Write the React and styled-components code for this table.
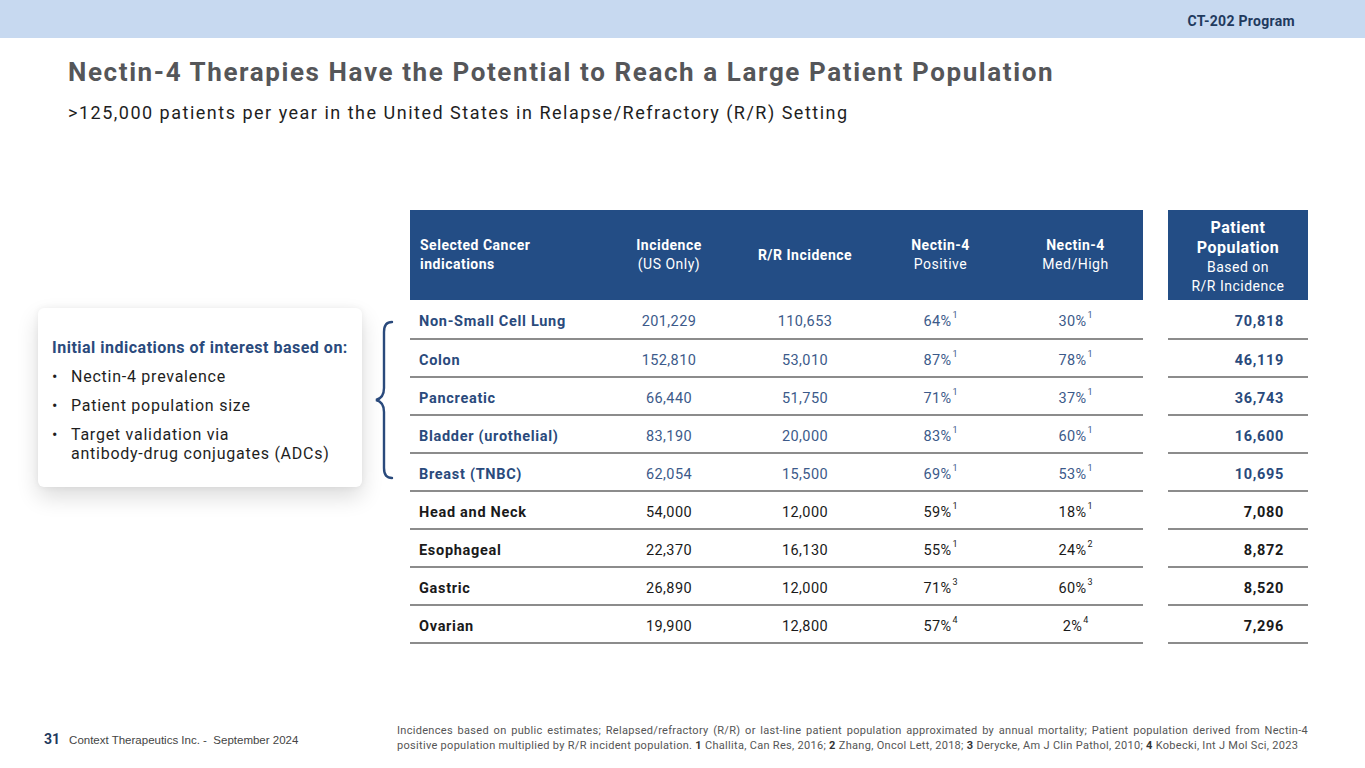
import styled, { createGlobalStyle } from 'styled-components'

const GlobalStyle = createGlobalStyle`
  html, body { margin: 0; padding: 0; background: #fff; }
  body { font-family: Roboto, "Noto Sans", sans-serif; }
  *, *::before, *::after { box-sizing: border-box; }
`

const NAVY = '#234d85'
const TEXT_NAVY = '#2a4a7c'

const rows = [
  { name: 'Non-Small Cell Lung', inc: '201,229', rr: '110,653', pos: '64%', posRef: 1, med: '30%', medRef: 1, pop: '70,818', hi: true },
  { name: 'Colon', inc: '152,810', rr: '53,010', pos: '87%', posRef: 1, med: '78%', medRef: 1, pop: '46,119', hi: true },
  { name: 'Pancreatic', inc: '66,440', rr: '51,750', pos: '71%', posRef: 1, med: '37%', medRef: 1, pop: '36,743', hi: true },
  { name: 'Bladder (urothelial)', inc: '83,190', rr: '20,000', pos: '83%', posRef: 1, med: '60%', medRef: 1, pop: '16,600', hi: true },
  { name: 'Breast (TNBC)', inc: '62,054', rr: '15,500', pos: '69%', posRef: 1, med: '53%', medRef: 1, pop: '10,695', hi: true },
  { name: 'Head and Neck', inc: '54,000', rr: '12,000', pos: '59%', posRef: 1, med: '18%', medRef: 1, pop: '7,080' },
  { name: 'Esophageal', inc: '22,370', rr: '16,130', pos: '55%', posRef: 1, med: '24%', medRef: 2, pop: '8,872' },
  { name: 'Gastric', inc: '26,890', rr: '12,000', pos: '71%', posRef: 3, med: '60%', medRef: 3, pop: '8,520' },
  { name: 'Ovarian', inc: '19,900', rr: '12,800', pos: '57%', posRef: 4, med: '2%', medRef: 4, pop: '7,296' },
]

const Slide = styled.div`
  width: 1365px;
  height: 768px;
  display: flex;
  flex-direction: column;
  overflow: hidden;
  position: relative;
`

const TopBar = styled.header`
  height: 38px;
  background: #c7d9f0;
  display: flex;
  align-items: center;
  justify-content: flex-end;
  padding-right: 70px;
  padding-top: 4px;
  font-size: 14px;
  font-weight: 700;
  color: #1f3a5e;
  letter-spacing: 0.3px;
`

const Heading = styled.div`
  padding-left: 68px;
  margin-top: 18px;
`

const Title = styled.h1`
  margin: 0;
  font-size: 26px;
  line-height: 32px;
  font-weight: 700;
  color: #555659;
  letter-spacing: 1.6px;
`

const Subtitle = styled.p`
  margin: 13px 0 0;
  font-size: 18px;
  line-height: 24px;
  color: #1e1e1e;
  letter-spacing: 1.5px;
`

const Main = styled.main`
  display: flex;
  align-items: flex-start;
  margin-top: 85px;
  padding-left: 38px;
`

const InfoCard = styled.div`
  width: 324px;
  height: 179px;
  margin-top: 98px;
  padding: 30px 0 0 14px;
  background: #fff;
  border-radius: 6px;
  box-shadow: 0 10px 22px rgba(0, 0, 0, 0.14), 0 0 6px rgba(0, 0, 0, 0.06);
`

const CardTitle = styled.div`
  font-size: 16px;
  font-weight: 700;
  color: ${TEXT_NAVY};
  letter-spacing: 0.5px;
  margin-bottom: 10px;
`

const Bullets = styled.ul`
  margin: 0;
  padding: 0;
  list-style: none;
`

const Bullet = styled.li`
  position: relative;
  padding-left: 19px;
  font-size: 16px;
  line-height: 19px;
  color: #1e1e1e;
  letter-spacing: 0.75px;
  margin-bottom: 10px;
  &::before {
    content: '•';
    position: absolute;
    left: 0;
    top: 0;
  }
`

const Brace = styled.svg`
  margin: 110px 16px 0 12px;
  flex-shrink: 0;
`

const Table = styled.div`
  display: grid;
  grid-template-columns: 191px 136px 136px 135px 135px 165px;
`

const HeadCell = styled.div`
  height: 90px;
  background: ${NAVY};
  color: #fff;
  display: flex;
  flex-direction: column;
  justify-content: center;
  align-items: ${(p) => (p.$left ? 'flex-start' : 'center')};
  text-align: ${(p) => (p.$left ? 'left' : 'center')};
  padding-left: ${(p) => (p.$left ? '10px' : '0')};
  padding-top: ${(p) => (p.$sep ? '4px' : '0')};
  margin-left: ${(p) => (p.$sep ? '25px' : '0')};
  font-size: 14px;
  line-height: 19px;
  letter-spacing: 0.5px;
`

const HeadBold = styled.span`
  font-weight: 700;
  font-size: ${(p) => (p.$big ? '16px' : '14px')};
  line-height: ${(p) => (p.$big ? '20px' : '19px')};
`

const Cell = styled.div`
  height: ${(p) => (p.$first ? '40px' : '38px')};
  border-bottom: 2px solid #8c8c8c;
  display: flex;
  align-items: center;
  justify-content: ${(p) => (p.$align === 'left' ? 'flex-start' : p.$align === 'right' ? 'flex-end' : 'center')};
  padding-left: ${(p) => (p.$align === 'left' ? '9px' : '0')};
  padding-right: ${(p) => (p.$align === 'right' ? '24px' : '0')};
  margin-left: ${(p) => (p.$sep ? '25px' : '0')};
  padding-top: 4px;
  font-size: 14.5px;
  font-weight: ${(p) => (p.$bold ? 700 : 400)};
  color: ${(p) => (p.$hi ? (p.$bold ? TEXT_NAVY : '#3c5a8a') : '#1a1a1a')};
  letter-spacing: ${(p) => (p.$bold ? '0.7px' : '0.4px')};
`

const Sup = styled.span`
  font-size: 9px;
  line-height: 1;
  position: relative;
  top: -6px;
  margin-left: 1px;
  letter-spacing: 0;
`

const Footer = styled.footer`
  margin-top: auto;
  height: 58px;
  display: flex;
  align-items: flex-start;
  padding: 13px 0 0 44px;
`

const PageInfo = styled.div`
  display: flex;
  align-items: baseline;
  width: 353px;
  padding-top: 8px;
  font-family: "Liberation Sans", Arial, sans-serif;
  font-size: 11.5px;
  color: #444;
`

const PageNum = styled.span`
  font-family: Roboto, sans-serif;
  font-size: 14px;
  font-weight: 700;
  color: #1f3a5e;
  margin-right: 9px;
`

const Footnote = styled.p`
  margin: 0;
  width: 911px;
  font-size: 11px;
  line-height: 15px;
  letter-spacing: 0.3px;
  color: #555;
  text-align: justify;
  text-align-last: left;
  b { font-weight: 700; color: #333; }
`

export default function App() {
  return (
    <>
      <GlobalStyle />
      <Slide>
        <TopBar>CT-202 Program</TopBar>
        <Heading>
          <Title>Nectin-4 Therapies Have the Potential to Reach a Large Patient Population</Title>
          <Subtitle>&gt;125,000 patients per year in the United States in Relapse/Refractory (R/R) Setting</Subtitle>
        </Heading>
        <Main>
          <InfoCard>
            <CardTitle>Initial indications of interest based on:</CardTitle>
            <Bullets>
              <Bullet>Nectin-4 prevalence</Bullet>
              <Bullet>Patient population size</Bullet>
              <Bullet>Target validation via<br />antibody-drug conjugates (ADCs)</Bullet>
            </Bullets>
          </InfoCard>
          <Brace width="20" height="160" viewBox="0 0 20 160">
            <path
              d="M18 2 Q10 2 10 12 L10 68 Q10 78 2 80 Q10 82 10 92 L10 148 Q10 158 18 158"
              fill="none"
              stroke={TEXT_NAVY}
              strokeWidth="2.4"
              strokeLinecap="round"
            />
          </Brace>
          <Table>
            <HeadCell $left>
              <HeadBold>Selected Cancer</HeadBold>
              <HeadBold>indications</HeadBold>
            </HeadCell>
            <HeadCell>
              <HeadBold>Incidence</HeadBold>
              <span>(US Only)</span>
            </HeadCell>
            <HeadCell>
              <HeadBold>R/R Incidence</HeadBold>
            </HeadCell>
            <HeadCell>
              <HeadBold>Nectin-4</HeadBold>
              <span>Positive</span>
            </HeadCell>
            <HeadCell>
              <HeadBold>Nectin-4</HeadBold>
              <span>Med/High</span>
            </HeadCell>
            <HeadCell $sep>
              <HeadBold $big>Patient</HeadBold>
              <HeadBold $big>Population</HeadBold>
              <span>Based on</span>
              <span>R/R Incidence</span>
            </HeadCell>
            {rows.map((r, i) => (
              <RowCells key={r.name} r={r} first={i === 0} />
            ))}
          </Table>
        </Main>
        <Footer>
          <PageInfo>
            <PageNum>31</PageNum>
            Context Therapeutics Inc. -&nbsp; September 2024
          </PageInfo>
          <Footnote>
            Incidences based on public estimates; Relapsed/refractory (R/R) or last-line patient population approximated by annual mortality; Patient population derived from Nectin-4 positive population multiplied by R/R incident population. <b>1</b> Challita, Can Res, 2016; <b>2</b> Zhang, Oncol Lett, 2018; <b>3</b> Derycke, Am J Clin Pathol, 2010; <b>4</b> Kobecki, Int J Mol Sci, 2023
          </Footnote>
        </Footer>
      </Slide>
    </>
  )
}

const RowCells = ({ r, first }) => (
  <>
    <Cell $first={first} $align="left" $bold $hi={r.hi}>{r.name}</Cell>
    <Cell $first={first} $hi={r.hi}>{r.inc}</Cell>
    <Cell $first={first} $hi={r.hi}>{r.rr}</Cell>
    <Cell $first={first} $hi={r.hi}>{r.pos}<Sup>{r.posRef}</Sup></Cell>
    <Cell $first={first} $hi={r.hi}>{r.med}<Sup>{r.medRef}</Sup></Cell>
    <Cell $first={first} $align="right" $sep $bold $hi={r.hi}>{r.pop}</Cell>
  </>
)
